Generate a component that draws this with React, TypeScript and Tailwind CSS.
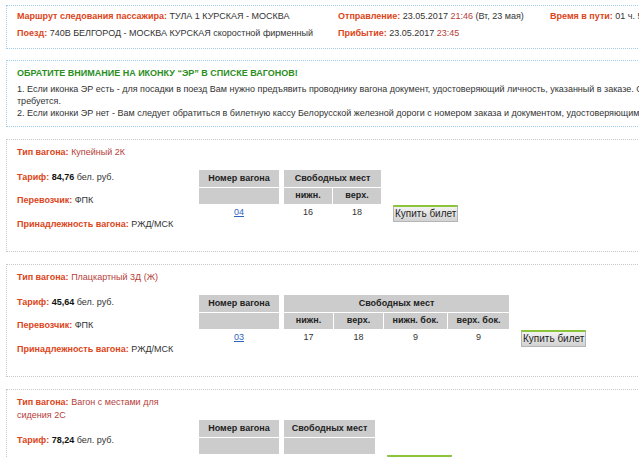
import React from "react";

const L = ({ children }: { children: React.ReactNode }) => (
  <span className="font-bold text-[#dc451a]">{children}</span>
);

type Sub = { label: string; w: number; value: string };

function Wagon({
  type,
  tariff,
  num,
  freeW,
  subs,
  freeValue,
}: {
  type: string;
  tariff: string;
  num: string;
  freeW: number;
  subs: Sub[];
  freeValue?: string;
}) {
  return (
    <div className="mt-[12px] flex border border-dotted border-[#c8c8c8]">
      <div className="w-[180px] shrink-0 pl-[10px] pr-[10px] pt-[6px] pb-[21px] leading-[12px]">
        <div className="leading-[13px]">
          <L>Тип вагона:</L> <span className="text-[#b6403a]">{type}</span>
        </div>
        <div className="mt-[12px] whitespace-nowrap">
          <L>Тариф:</L> <span className="font-bold text-[#111]">{tariff}</span> бел. руб.
        </div>
        <div className="mt-[11px] whitespace-nowrap">
          <L>Перевозчик:</L> ФПК
        </div>
        <div className="mt-[12px] whitespace-nowrap">
          <L>Принадлежность вагона:</L> РЖД/МСК
        </div>
      </div>
      <div className="ml-[12px] flex items-start pt-[30px]">
        <div className="flex w-[80px] flex-col">
          <div className="flex h-[17px] items-center justify-center bg-[#cccccc] font-bold text-[#222]">
            Номер вагона
          </div>
          <div className="mt-[1px] h-[16px] bg-[#cccccc]" />
          <div className="mt-[1px] flex h-[15px] items-center justify-center">
            <span className="text-[#2f63c0] underline">{num}</span>
          </div>
        </div>
        <div className="ml-[5px] flex flex-col" style={{ width: freeW }}>
          <div className="flex h-[17px] items-center justify-center bg-[#cccccc] font-bold text-[#222]">
            Свободных мест
          </div>
          {subs.length > 0 ? (
            <>
              <div className="mt-[1px] flex gap-[1px]">
                {subs.map((s) => (
                  <div
                    key={s.label}
                    className="flex h-[16px] items-center justify-center bg-[#cccccc] font-bold text-[#222]"
                    style={{ width: s.w }}
                  >
                    {s.label}
                  </div>
                ))}
              </div>
              <div className="mt-[1px] flex gap-[1px]">
                {subs.map((s) => (
                  <div
                    key={s.label}
                    className="flex h-[15px] items-center justify-center"
                    style={{ width: s.w }}
                  >
                    {s.value}
                  </div>
                ))}
              </div>
            </>
          ) : (
            <>
              <div className="mt-[1px] h-[16px] bg-[#cccccc]" />
              <div className="mt-[1px] flex h-[15px] items-center justify-center">{freeValue}</div>
            </>
          )}
        </div>
        <div className="ml-[12px] flex flex-col pt-[35px]">
          <button className="h-[17px] border border-[#b5b5b5] border-t-[2px] border-t-[#8cc43c] bg-gradient-to-b from-[#f2f2f2] to-[#d2d2d2] px-[1px] text-[10px] leading-[12px] text-[#1e1e1e] whitespace-nowrap">
            Купить билет
          </button>
        </div>
      </div>
    </div>
  );
}

export default function App() {
  return (
    <div className="h-[457px] w-[639px] overflow-hidden bg-white font-['Liberation_Sans',Arial,sans-serif] text-[9px] text-[#333]">
      <div className="w-[780px] pl-[6px] pt-[5px]">
        <div className="border border-dotted border-[#a3cbea] px-[10px] pt-[2px] pb-[6px] leading-[17px]">
          <div className="grid grid-cols-[321px_212px_auto] whitespace-nowrap">
            <div>
              <L>Маршрут следования пассажира:</L> ТУЛА 1 КУРСКАЯ - МОСКВА
            </div>
            <div>
              <L>Отправление:</L> 23.05.2017 <span className="text-[#b6403a]">21:46</span> (Вт, 23 мая)
            </div>
            <div>
              <L>Время в пути:</L> 01 ч. 59 мин.
            </div>
            <div>
              <L>Поезд:</L> 740В БЕЛГОРОД - МОСКВА КУРСКАЯ скоростной фирменный
            </div>
            <div>
              <L>Прибытие:</L> 23.05.2017 <span className="text-[#b6403a]">23:45</span>
            </div>
            <div />
          </div>
        </div>

        <div className="mt-[11px] border border-dotted border-[#a3cbea] px-[10px] pt-[6px] pb-[7px] leading-[12px]">
          <div className="font-bold text-[#2b8e1d]">ОБРАТИТЕ ВНИМАНИЕ НА ИКОНКУ “ЭР” В СПИСКЕ ВАГОНОВ!</div>
          <div className="mt-[4px] whitespace-nowrap">
            <div>
              1. Если иконка ЭР есть - для посадки в поезд Вам нужно предъявить проводнику вагона документ, удостоверяющий личность, указанный в заказе. Оформление посадочного талона не
            </div>
            <div>требуется.</div>
            <div>
              2. Если иконки ЭР нет - Вам следует обратиться в билетную кассу Белорусской железной дороги с номером заказа и документом, удостоверяющим личность.
            </div>
          </div>
        </div>

        <Wagon
          type="Купейный 2К"
          tariff="84,76"
          num="04"
          freeW={97}
          subs={[
            { label: "нижн.", w: 48, value: "16" },
            { label: "верх.", w: 48, value: "18" },
          ]}
        />
        <Wagon
          type="Плацкартный 3Д (Ж)"
          tariff="45,64"
          num="03"
          freeW={225}
          subs={[
            { label: "нижн.", w: 49, value: "17" },
            { label: "верх.", w: 49, value: "18" },
            { label: "нижн. бок.", w: 63, value: "9" },
            { label: "верх. бок.", w: 61, value: "9" },
          ]}
        />
        <Wagon
          type="Вагон с местами для сидения 2С"
          tariff="78,24"
          num="08"
          freeW={91}
          subs={[]}
          freeValue="51"
        />
      </div>
    </div>
  );
}
